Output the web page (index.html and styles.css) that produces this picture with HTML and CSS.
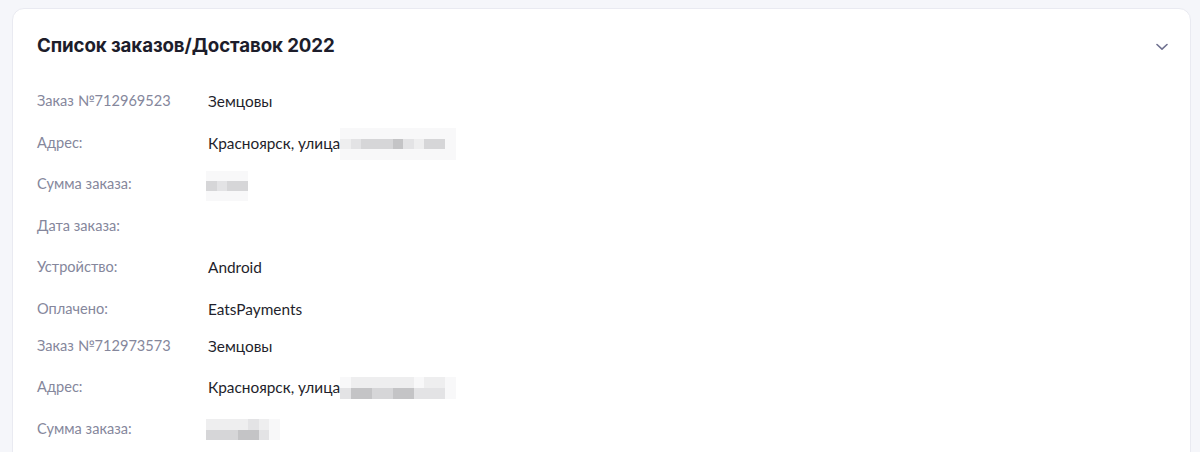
FILE: index.html
```html
<!DOCTYPE html>
<html lang="ru">
<head>
<meta charset="utf-8">
<link rel="stylesheet" href="styles.css">
</head>
<body>
<div class="card">
  <div class="card-head">
    <h2 class="title">Список заказов/Доставок 2022</h2>
    <svg class="chev" width="12" height="8" viewBox="0 0 12 8"><path d="M1 1.5 L6 6.2 L11 1.5" fill="none" stroke="#6f7190" stroke-width="1.6" stroke-linecap="round" stroke-linejoin="round"/></svg>
  </div>
  <div class="orders">
    <div class="group">
      <div class="row"><span class="label">Заказ №712969523</span><span class="value">Земцовы</span></div>
      <div class="row"><span class="label">Адрес:</span><span class="value">Красноярск, улица<span class="mosaic m-addr1"><i class="c0"></i><i class="c0"></i><i class="c0"></i><i class="c0"></i><i class="c0"></i><i class="c0"></i><i class="c0"></i><i class="c0"></i><i class="c0"></i><i class="c0"></i><i class="c0"></i><i class="c1"></i><i class="c2"></i><i class="c3"></i><i class="c3"></i><i class="c3"></i><i class="c4"></i><i class="c2"></i><i class="c1"></i><i class="c3"></i><i class="c3"></i><i class="c0"></i><i class="c0"></i><i class="c0"></i><i class="c0"></i><i class="c0"></i><i class="c0"></i><i class="c0"></i><i class="c0"></i><i class="c0"></i><i class="c0"></i><i class="c0"></i><i class="c0"></i></span></span></div>
      <div class="row"><span class="label">Сумма заказа:</span><span class="value"><span class="mosaic m-sum1"><i class="c0"></i><i class="c0"></i><i class="c0"></i><i class="c0"></i><i class="c3"></i><i class="c2"></i><i class="c3"></i><i class="c3"></i><i class="c0"></i><i class="c0"></i><i class="c0"></i><i class="c0"></i></span></span></div>
      <div class="row"><span class="label">Дата заказа:</span><span class="value"></span></div>
      <div class="row"><span class="label">Устройство:</span><span class="value">Android</span></div>
      <div class="row"><span class="label">Оплачено:</span><span class="value">EatsPayments</span></div>
    </div>
    <div class="group">
      <div class="row"><span class="label">Заказ №712973573</span><span class="value">Земцовы</span></div>
      <div class="row"><span class="label">Адрес:</span><span class="value">Красноярск, улица<span class="mosaic m-addr2"><i class="c0"></i><i class="c1"></i><i class="c1"></i><i class="c1"></i><i class="c1"></i><i class="c1"></i><i class="c1"></i><i class="c0"></i><i class="c1"></i><i class="c1"></i><i class="c0"></i><i class="c2"></i><i class="c4"></i><i class="c4"></i><i class="c3"></i><i class="c3"></i><i class="c4"></i><i class="c4"></i><i class="c2"></i><i class="c2"></i><i class="c2"></i><i class="c0"></i></span></span></div>
      <div class="row"><span class="label">Сумма заказа:</span><span class="value"><span class="mosaic m-sum2"><i class="c1"></i><i class="c1"></i><i class="c1"></i><i class="c1"></i><i class="c2"></i><i class="c1"></i><i class="c0"></i><i class="c3"></i><i class="c3"></i><i class="c3"></i><i class="c4"></i><i class="c4"></i><i class="c2"></i><i class="c0"></i></span></span></div>
    </div>
  </div>
</div>
</body>
</html>
```

FILE: styles.css
```css
html, body {
  margin: 0;
  padding: 0;
}
body {
  background: #f5f6fa;
  font-family: "Lato", "Noto Sans", sans-serif;
  padding: 8px 9px 0 12px;
  height: 452px;
  box-sizing: border-box;
  overflow: hidden;
}
.card {
  background: #ffffff;
  border: 1px solid #e9eaf1;
  border-radius: 12px;
  padding: 25px 24px 40px 24px;
  min-height: 600px;
}
.card-head {
  display: flex;
  align-items: center;
  justify-content: space-between;
  height: 24px;
}
.title {
  margin: 0;
  font-family: "Inter", "Noto Sans", sans-serif;
  font-weight: 700;
  font-size: 18.7px;
  line-height: 24px;
  color: #1d1d2b;
  letter-spacing: -0.1px;
}
.chev {
  margin-right: -2px;
  margin-top: 1px;
}
.orders {
  margin-top: 33px;
  display: flex;
  flex-direction: column;
  gap: 17px;
}
.group {
  display: flex;
  flex-direction: column;
  gap: 21.5px;
}
.row {
  display: flex;
  align-items: center;
  height: 20px;
  line-height: 20px;
}
.label {
  width: 171px;
  flex: none;
  font-size: 14.6px;
  color: #85879c;
}
.value {
  font-size: 15.4px;
  color: #1f1f2c;
  display: flex;
  align-items: center;
}
.mosaic {
  display: grid;
  grid-auto-flow: row;
}
.mosaic i {
  display: block;
}
.m-addr1 {
  grid-template-columns: repeat(11, 10.5px);
  grid-template-rows: repeat(3, 10.5px);
  margin-top: 3px;
}
.m-addr2 {
  grid-template-columns: repeat(11, 10.5px);
  grid-template-rows: repeat(2, 11px);
  margin-top: 2px;
}
.m-sum1 {
  grid-template-columns: repeat(4, 10.5px);
  grid-template-rows: repeat(3, 10px);
  margin-left: -2px;
  margin-top: 4px;
}
.m-sum2 {
  grid-template-columns: repeat(7, 10.5px);
  grid-template-rows: repeat(2, 10.5px);
  margin-left: -2px;
  margin-top: 2px;
}
.c0 { background: #f8f8f9; }
.c1 { background: #eeeeef; }
.c2 { background: #e3e3e5; }
.c3 { background: #d6d6d8; }
.c4 { background: #c4c4c6; }
```
